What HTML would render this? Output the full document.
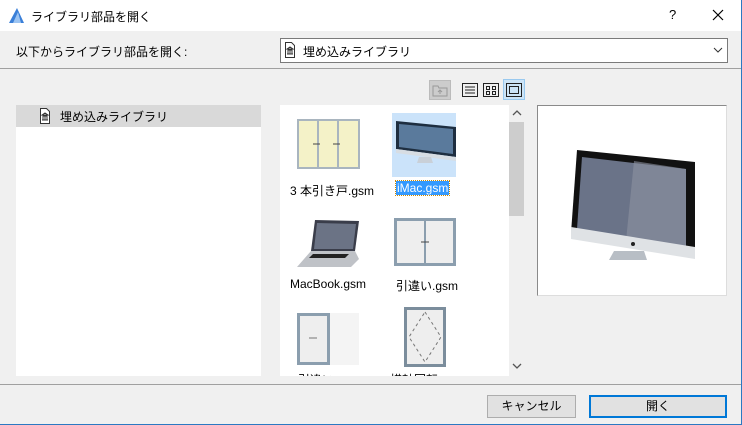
<!DOCTYPE html>
<html><head><meta charset="utf-8"><style>
*{margin:0;padding:0;box-sizing:border-box}
body{width:742px;height:425px;overflow:hidden;background:#f0f0f0;font-family:"Liberation Sans","Noto Sans CJK JP",sans-serif;font-size:12px;color:#000;position:relative}
.abs{position:absolute}
</style></head><body>
<div class="abs" style="left:0;top:0;width:742px;height:425px;border:1px solid #2b79c2;border-top:none;border-left:none"></div>
<div class="abs" style="left:0;top:0;width:741px;height:31px;background:#fff"></div>
<svg class="abs" style="left:8px;top:7px" width="17" height="17"><polygon points="1,16 9,1 16,16" fill="#3a7fd8"/><polygon points="5,16 10,5 13,16" fill="#9cc4f2"/></svg>
<div class="abs" style="left:31px;top:8px;font-size:12px">ライブラリ部品を開く</div>
<div class="abs" style="left:669px;top:7px;font-size:13px">?</div>
<svg class="abs" style="left:712px;top:9px" width="12" height="12"><path d="M1 1l10 10M11 1L1 11" stroke="#000" stroke-width="1.2"/></svg>
<div class="abs" style="left:16px;top:43px">以下からライブラリ部品を開く:</div>
<div class="abs" style="left:280px;top:38px;width:448px;height:25px;background:#fff;border:1px solid #7a7a7a"></div>
<svg class="abs" style="left:284px;top:42px" width="12" height="16"><path d="M1.5 .5h6l3 3v12h-9z" fill="#fff" stroke="#333"/><path d="M3 7l3-2 3 2zM3.5 8h5M4 8.5v3M6 8.5v3M8 8.5v3M3 12h6" stroke="#333" fill="none"/></svg>
<div class="abs" style="left:303px;top:43px">埋め込みライブラリ</div>
<svg class="abs" style="left:713px;top:46px" width="10" height="8"><path d="M1 2l4 4 4-4" stroke="#333" fill="none"/></svg>
<div class="abs" style="left:0;top:68px;width:741px;height:1px;background:#a0a0a0"></div>
<div class="abs" style="left:429px;top:80px;width:22px;height:20px;background:#ccc;border:1px solid #bbb"></div>
<svg class="abs" style="left:432px;top:83px" width="16" height="14"><path d="M1 3h5l1 2h8v8H1z" fill="none" stroke="#999"/><path d="M8 11V7M6 9l2-2 2 2" stroke="#999" fill="none"/></svg>
<svg class="abs" style="left:462px;top:82px" width="16" height="16"><rect x=".5" y="1.5" width="15" height="13" fill="none" stroke="#222"/><path d="M3 5h10M3 8h10M3 11h10" stroke="#222"/></svg>
<svg class="abs" style="left:483px;top:82px" width="16" height="16"><rect x=".5" y="1.5" width="15" height="13" fill="none" stroke="#222"/><rect x="3.5" y="4.5" width="3" height="3" fill="none" stroke="#222"/><rect x="9.5" y="4.5" width="3" height="3" fill="none" stroke="#222"/><rect x="3.5" y="9.5" width="3" height="3" fill="none" stroke="#222"/><rect x="9.5" y="9.5" width="3" height="3" fill="none" stroke="#222"/></svg>
<div class="abs" style="left:503px;top:79px;width:22px;height:21px;background:#cce4f7;border:1px solid #99c9ef"></div>
<svg class="abs" style="left:506px;top:82px" width="16" height="16"><rect x=".5" y="1.5" width="15" height="13" fill="none" stroke="#222"/><rect x="3.5" y="4.5" width="9" height="7" fill="none" stroke="#222"/></svg>
<div class="abs" style="left:16px;top:105px;width:245px;height:271px;background:#fff"></div>
<div class="abs" style="left:16px;top:105px;width:245px;height:22px;background:#d9d9d9"></div>
<svg class="abs" style="left:39px;top:108px" width="12" height="16"><path d="M1.5 .5h6l3 3v12h-9z" fill="#fff" stroke="#333"/><path d="M3 7l3-2 3 2zM3.5 8h5M4 8.5v3M6 8.5v3M8 8.5v3M3 12h6" stroke="#333" fill="none"/></svg>
<div class="abs" style="left:60px;top:108px">埋め込みライブラリ</div>
<div class="abs" style="left:280px;top:105px;width:246px;height:271px;background:#fff;overflow:hidden">
 <div class="abs" style="left:229px;top:0;width:17px;height:271px;background:#f0f0f0"></div>
 <div class="abs" style="left:229px;top:17px;width:15px;height:94px;background:#cdcdcd"></div>
 <svg class="abs" style="left:232px;top:4px" width="10" height="8"><path d="M1 6l4-4 4 4" stroke="#555" fill="none" stroke-width="1.3"/></svg>
 <svg class="abs" style="left:232px;top:257px" width="10" height="8"><path d="M1 2l4 4 4-4" stroke="#555" fill="none" stroke-width="1.3"/></svg>
 <svg class="abs" style="left:17px;top:14px" width="63" height="50"><rect x="1" y="1" width="61" height="48" fill="#f4f2c8" stroke="#a9b5bf" stroke-width="2"/><path d="M21 1v48M41 1v48" stroke="#a9b5bf" stroke-width="2"/><path d="M16 25h7M36 25h7" stroke="#444"/></svg>
 <div class="abs" style="left:10px;top:77px">3 本引き戸.gsm</div>
 <div class="abs" style="left:112px;top:8px;width:64px;height:64px;background:#cbe3fa"></div>
 <svg class="abs" style="left:114px;top:14px" width="62" height="55"><path d="M2 2l60 6v30l-60-8z" fill="#1e2e40"/><path d="M5 5l54 5v25L5 28z" fill="#5a7a9c"/><path d="M2 30l60 8v4L2 34z" fill="#d7dde3"/><path d="M25 38h12l2 6H23z" fill="#c9d0d8"/></svg>
 <div class="abs" style="left:116px;top:76px;background:#3399ff;color:#fff;outline:1px dotted #c80;padding:0 1px">iMac.gsm</div>
 <svg class="abs" style="left:15px;top:112px" width="66" height="52"><path d="M20 3l44 1-4 30H16z" fill="#3a3d4a"/><path d="M22 6l39 1-3 25H19z" fill="#6b7385"/><path d="M16 34h44l4 8-8 8H2z" fill="#bfc2c7"/><path d="M18 37h36l-4 4H14z" fill="#222"/></svg>
 <div class="abs" style="left:10px;top:172px">MacBook.gsm</div>
 <svg class="abs" style="left:114px;top:113px" width="62" height="48"><rect x="1.5" y="1.5" width="59" height="45" fill="#eee" stroke="#8b9eae" stroke-width="3"/><path d="M31 1v46" stroke="#8b9eae" stroke-width="2"/><path d="M27 24h8" stroke="#444"/></svg>
 <div class="abs" style="left:116px;top:172px">引違い.gsm</div>
 <div class="abs" style="left:17px;top:208px;width:62px;height:52px;background:#f4f4f4"></div>
 <svg class="abs" style="left:17px;top:208px" width="34" height="52"><rect x="1.5" y="1.5" width="30" height="49" fill="#eee" stroke="#8b9eae" stroke-width="3"/><path d="M12 25h8" stroke="#777"/></svg>
 <div class="abs" style="left:18px;top:266px">引違い.gsm</div>
 <svg class="abs" style="left:124px;top:202px" width="42" height="60"><rect x="1.5" y="1.5" width="39" height="57" fill="#eee" stroke="#7b8d9c" stroke-width="3"/><path d="M21 5L37 30 21 55 5 30z" fill="none" stroke="#777" stroke-dasharray="3 3"/></svg>
 <div class="abs" style="left:110px;top:266px">横軸回転.gsm</div>
</div>
<div class="abs" style="left:537px;top:105px;width:190px;height:191px;background:#fff;border:1px solid #8a8a8a;border-right-color:#ddd;border-bottom-color:#ddd"></div>
<svg class="abs" style="left:569px;top:145px" width="130" height="120"><path d="M8 5l118 12v91L2 88z" fill="#111"/><path d="M13 12l104 12v80L8 84z" fill="#6a7388"/><path d="M65 16l52 8v80l-60-8z" fill="#8d93a2" opacity=".6"/><path d="M2 82l124 20v12L2 94z" fill="#dfe2e5"/><circle cx="64" cy="99" r="2" fill="#222"/><path d="M45 106h30l3 9H40z" fill="#b8bec5"/></svg>
<div class="abs" style="left:0;top:384px;width:741px;height:1px;background:#a0a0a0"></div>
<div class="abs" style="left:487px;top:395px;width:89px;height:23px;background:#e1e1e1;border:1px solid #adadad;text-align:center;line-height:21px">キャンセル</div>
<div class="abs" style="left:589px;top:395px;width:138px;height:23px;background:#e1e1e1;border:2px solid #0078d7;text-align:center;line-height:19px">開く</div>
</body></html>
